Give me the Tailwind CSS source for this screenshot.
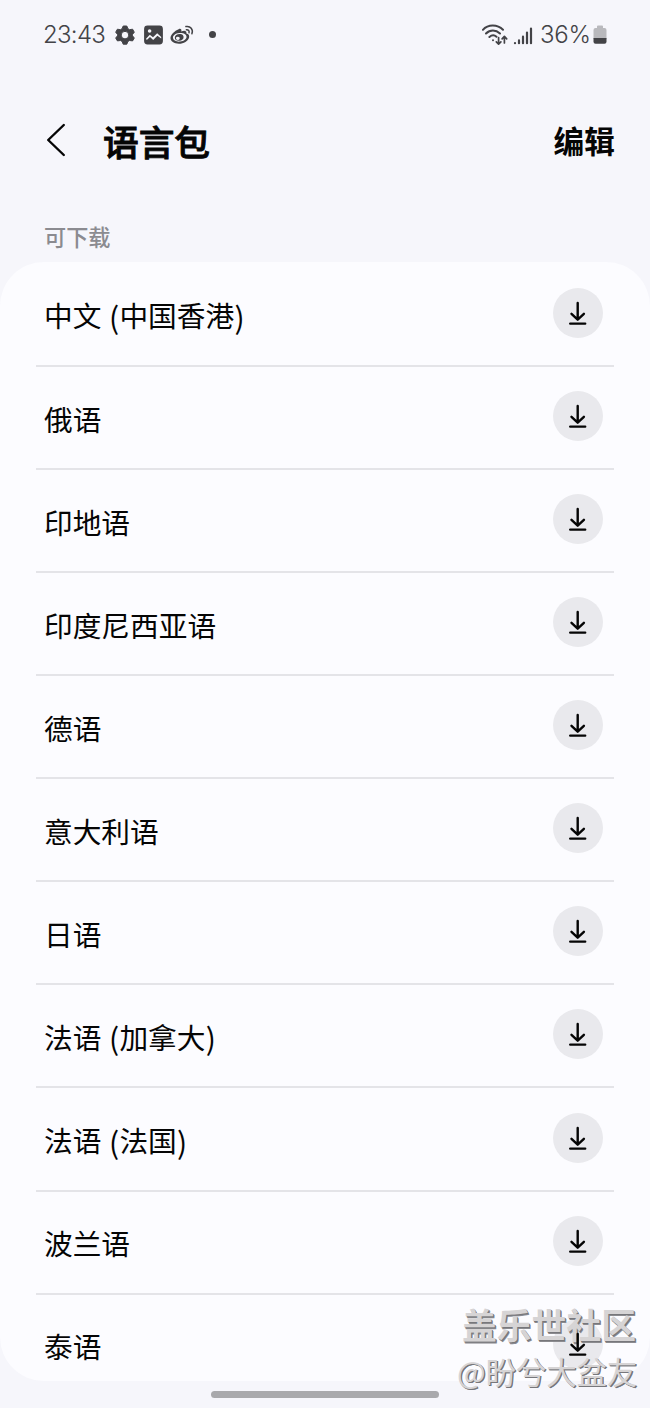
<!DOCTYPE html>
<html lang="zh-CN">
<head>
<meta charset="utf-8">
<title>语言包</title>
<script src="https://cdn.jsdelivr.net/npm/@tailwindcss/browser@4"></script>
</head>
<body class="relative flex h-[1408px] w-[650px] flex-col overflow-hidden bg-[#f6f6fb] font-['Noto_Sans_CJK_SC',sans-serif] text-[#050505]">
<svg class="hidden">
  <symbol id="download" viewBox="0 0 50 50"><path d="M24.7 15V31.3M18.5 25.8L24.7 31.7L30.9 25.8M17.2 35.6H32.2" fill="none" stroke="#050505" stroke-width="2.4" stroke-linecap="round" stroke-linejoin="round"/></symbol>
</svg>

<header class="flex h-[69px] shrink-0 items-center justify-between pr-[43px] pl-[43px] text-[#434347]">
  <div class="flex items-center">
    <span class="w-[72px] font-[Inter,sans-serif] text-[24px] leading-none font-light tracking-[-0.7px]">23:43</span>
    <svg class="h-5 w-5" viewBox="0 0 20 20"><path fill="#434347" fill-rule="evenodd" stroke="#434347" stroke-linejoin="round" d="M8.2 1H11.8L12.9 3.7L14.6 4.7L17.6 4.2L19.3 7.2L17.5 9.4V10.8L19.3 13L17.6 15.9L14.6 15.5L12.9 16.4L11.8 19.2H8.2L7.1 16.4L5.4 15.5L2.4 15.9L.7 13L2.5 10.8V9.4L.7 7.2L2.4 4.2L5.4 4.7L7.1 3.7ZM10 6.3A3.8 3.8 0 1 0 10 13.9A3.8 3.8 0 1 0 10 6.3Z"/></svg>
    <svg class="ml-[9px] h-5 w-[19px]" viewBox="0 0 19 20"><rect x=".9" y="1.4" width="17.2" height="17.2" rx="2.6" fill="#434347" stroke="#434347" stroke-width="1.6"/><circle cx="5.6" cy="6" r="1.8" fill="#f6f6fb"/><path d="M2 13.8L5.8 9.7L9 12.2L13.2 8.3L17.2 12V13.6L13.4 10.8L9.2 14.9L6 12.1L2.8 15Z" fill="#f6f6fb"/></svg>
    <svg class="ml-[7px] h-5 w-6" viewBox="0 0 24 20"><path fill="#434347" fill-rule="evenodd" d="M8.6 4.2C10.7 3.2 11.9 4.5 11.3 6.4C14.2 5.3 17 5.5 16.4 8.6C18.6 9.1 19.6 10.4 19.1 12.4C18.2 16.1 13.7 18.7 8.9 18.7C4 18.7.5 16.3.5 13C.5 9.8 4.6 5.8 8.6 4.2ZM9.3 8.1C5.4 8.5 2.7 10.6 3 13.1C3.2 15.6 6.3 17 10.2 16.6C14 16.2 16.8 14 16.5 11.6C16.3 9.1 13.1 7.7 9.3 8.1Z"/><path fill="#434347" fill-rule="evenodd" d="M10.2 9C7 8.8 4.8 10.6 4.8 12.8S6.7 16 9.3 15.8C12 15.6 13.7 13.8 13.6 11.9C13.5 10.2 12.1 9.1 10.2 9ZM8.1 11.7A1.9 1.6 0 1 1 7.6 14.9A1.9 1.6 0 1 1 8.1 11.7Z"/><path d="M16.4 4.8C18.4 4.5 19.6 6.1 19 7.8M15.9 1.6C20.5.6 23.5 4.6 21.9 8.7" fill="none" stroke="#434347" stroke-width="1.5" stroke-linecap="round"/></svg>
    <span class="ml-[15px] h-[7px] w-[7px] rounded-full bg-[#434347]"></span>
  </div>
  <div class="flex items-center">
    <svg class="h-6 w-7" viewBox="0 0 28 24" fill="none" stroke="#434347" stroke-linecap="round"><path stroke-width="2" d="M.9 6.8C6 1.2 15.5 1.2 21 6.8M4 10.5C8 6.5 13.8 6.5 18 10.5M7.4 14C9.8 11.8 12.4 11.8 14.5 13.8"/><circle cx="11" cy="17.2" r="1" fill="#434347" stroke="none"/><path stroke-width="1.7" stroke-linejoin="round" d="M16.6 14.5V21M14.3 18.8L16.6 21.2L18.9 18.8M22.4 20V13.7M20.1 15.8L22.4 13.4L24.7 15.8"/></svg>
    <svg class="mr-px ml-[3px] h-5 w-5" viewBox="0 0 20 20" stroke="#434347" stroke-width="2.2" stroke-linecap="round"><path d="M2 18V18.2M6 15.4V18.2M10 11.7V18.2M14 7.5V18.2M18 3.5V18.2"/></svg>
    <span class="ml-[6px] w-[53px] font-[Inter,sans-serif] text-[24px] leading-none font-light tracking-[-0.2px]">36%</span>
    <svg class="h-5 w-[14px]" viewBox="0 0 14 20"><path fill="#b9b9bd" d="M4 3V1.5Q4 .5 5 .5H9Q10 .5 10 1.5V3H11.5Q13.5 3 13.5 5V14H.5V5Q.5 3 2.5 3Z"/><path fill="#434347" d="M.5 13H13.5V16.8Q13.5 18.8 11.5 18.8H2.5Q.5 18.8 .5 16.8Z"/></svg>
  </div>
</header>

<div class="flex h-[143px] shrink-0 items-center pr-[35px] pl-[46px]">
  <svg class="h-9 w-5" viewBox="0 0 20 36"><path d="M17.8 2L2.2 17L17.8 32" fill="none" stroke="#050505" stroke-width="2.4" stroke-linecap="round" stroke-linejoin="round"/></svg>
  <h1 class="ml-[37px] text-[35.7px] leading-none font-medium [-webkit-text-stroke:0.9px_#050505]">语言包</h1>
  <span class="ml-auto text-[30.7px] leading-none font-bold">编辑</span>
</div>
<div class="h-[50px] shrink-0 pt-[13px] pl-[44px] text-[22.2px] leading-[22px] font-medium text-[#8b8b90]">可下载</div>
<main id="list" class="h-[1118.5px] shrink-0 overflow-hidden rounded-[44px] bg-[#fcfcff] px-[36px]"></main>

<div class="absolute top-[1391px] left-[211px] h-[7px] w-[228px] rounded-full bg-[#a9a9ac]"></div>
<div class="absolute top-[1304px] left-[462px] text-[34.8px] leading-[40px] font-bold whitespace-nowrap text-[#d6d4d5] [text-shadow:1px_1px_0_#77777b,1.5px_1.5px_0_#8b8b8f]">盖乐世社区</div>
<div class="absolute top-[1352px] left-[457px] text-[30.3px] leading-[38px] font-normal whitespace-nowrap text-[#d6d4d5] [text-shadow:1px_1px_0_#77777b,1.3px_1.3px_0_#77777b]">@盼兮大盆友</div>

<script>
const languages = ['中文 (中国香港)', '俄语', '印地语', '印度尼西亚语', '德语', '意大利语', '日语', '法语 (加拿大)', '法语 (法国)', '波兰语', '泰语'];
const height = i => i === 0 ? 'h-[105px]' : i === 8 ? 'h-[103.7px]' : 'h-[103.05px]';
document.getElementById('list').innerHTML = languages.map((name, i) => `
  <div class="${height(i)} flex items-end justify-between border-b-2 border-[#e4e4e8] pr-[11px] pl-[8px]">
    <span class="flex h-[103px] items-center ${i === 0 || i > 7 ? 'pt-[4px]' : 'pt-[5px]'} text-[28.7px] leading-none whitespace-pre [word-spacing:1px]">${name.replace(/[()]/g, '<span class="inline-block w-[10.6px] text-center text-[30px]">$&</span>')}</span>
    <span class="mb-[27px] h-[50px] w-[50px] rounded-full bg-[#e9e9ed]"><svg class="${i === 10 ? 'relative z-10' : ''} h-[50px] w-[50px]"><use href="#download"/></svg></span>
  </div>`).join('');
</script>
</body>
</html>
